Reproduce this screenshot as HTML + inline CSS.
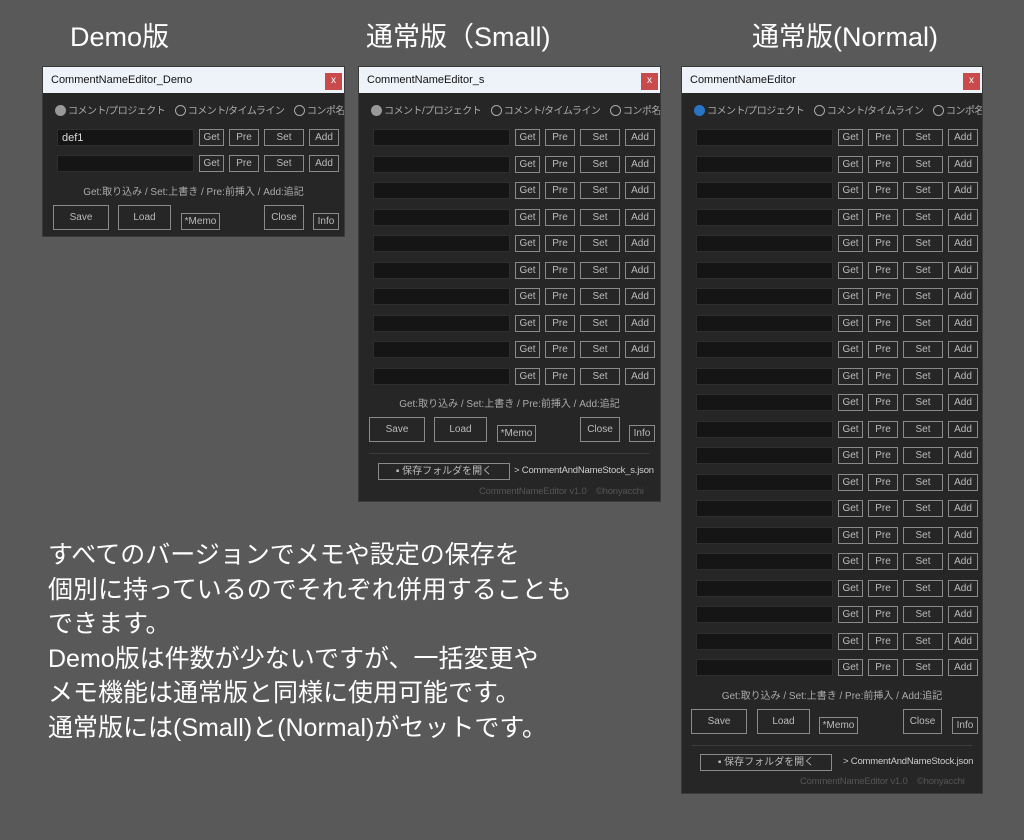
<!DOCTYPE html><html><head><meta charset="utf-8"><style>
body{margin:0;width:1024px;height:840px;background:#595959;position:relative;overflow:hidden;font-family:"Liberation Sans","Noto Sans CJK JP",sans-serif}
.h{position:absolute;color:#fff;font-size:27px;top:15px}
.w{position:absolute;background:#262626;border:1px solid #3a3a3a;overflow:hidden}
.t{position:absolute;left:0;right:0;top:0;height:26px;background:#eef3fa;color:#111;font-size:11px;line-height:26px;padding-left:8px}
.x{position:absolute;right:2px;top:6px;width:17px;height:17px;background:#c84a4a;color:#fff;font-size:10px;text-align:center;line-height:16px}
.rad{position:absolute;left:12px;top:35px;font-size:10px;letter-spacing:-0.5px;color:#aaa;white-space:nowrap}
.rad span{display:inline-block;width:9px;height:9px;border:1.5px solid #aaa;border-radius:50%;vertical-align:-2px;margin-right:2px}
.rad span.f{background:#999;border-color:#999}.rad span.bl{background:#2a74c6;border-color:#2a74c6}
.r{position:absolute;left:0;height:18px;width:300px}
.r i{position:absolute;left:14px;top:0;width:137px;height:17px;background:#151515;border:1px solid #2e2e2e;font-style:normal;font-size:11px;color:#ddd;line-height:17px;padding-left:4px;box-sizing:border-box}
.r b,.bt{position:absolute;top:0;height:17px;border:1px solid #8a8a8a;color:#bbb;font-weight:normal;font-size:10px;text-align:center;line-height:16px;box-sizing:border-box}
.g{left:156px;width:25px}.p{left:186px;width:30px}.s{left:221px;width:40px}.a{left:266px;width:30px}
.hl{position:absolute;left:0;right:0;text-align:center;font-size:10px;color:#aaa}
.bt{height:25px;line-height:23px}
.sep{position:absolute;left:10px;right:10px;height:1px;background:#3c3c3c}
.fd{position:absolute;font-size:9.5px;letter-spacing:-0.2px;color:#ccc;white-space:nowrap}
.txt{position:absolute;left:48px;top:538px;color:#fff;font-size:25px;line-height:34.5px;white-space:nowrap}
</style></head><body>
<div class="h" style="left:70px">Demo版</div>
<div class="h" style="left:366px">通常版（Small)</div>
<div class="h" style="left:752px">通常版(Normal)</div>

<div class="w" style="left:42px;top:66px;width:301px;height:169px">
<div class="t">CommentNameEditor_Demo</div><div class="x">x</div>
<div class="rad"><span class="f"></span>コメント/プロジェクト　<span></span>コメント/タイムライン　<span></span>コンポ名</div>
<div class="r" style="top:62px"><i>def1</i><b class="g">Get</b><b class="p">Pre</b><b class="s">Set</b><b class="a">Add</b></div>
<div class="r" style="top:88px"><i></i><b class="g">Get</b><b class="p">Pre</b><b class="s">Set</b><b class="a">Add</b></div>
<div class="hl" style="top:116px">Get:取り込み / Set:上書き / Pre:前挿入 / Add:追記</div>
<div class="bt" style="left:10px;top:138px;width:56px">Save</div>
<div class="bt" style="left:75px;top:138px;width:53px">Load</div>
<div class="bt" style="left:138px;top:146px;width:39px;height:17px;line-height:16px">*Memo</div>
<div class="bt" style="left:221px;top:138px;width:40px">Close</div>
<div class="bt" style="left:270px;top:146px;width:26px;height:17px;line-height:16px">Info</div>
</div>

<div class="w" style="left:358px;top:66px;width:301px;height:434px">
<div class="t">CommentNameEditor_s</div><div class="x">x</div>
<div class="rad"><span class="f"></span>コメント/プロジェクト　<span></span>コメント/タイムライン　<span></span>コンポ名</div>
<div class="r" style="top:62px"><i></i><b class="g">Get</b><b class="p">Pre</b><b class="s">Set</b><b class="a">Add</b></div>
<div class="r" style="top:88.5px"><i></i><b class="g">Get</b><b class="p">Pre</b><b class="s">Set</b><b class="a">Add</b></div>
<div class="r" style="top:115px"><i></i><b class="g">Get</b><b class="p">Pre</b><b class="s">Set</b><b class="a">Add</b></div>
<div class="r" style="top:141.5px"><i></i><b class="g">Get</b><b class="p">Pre</b><b class="s">Set</b><b class="a">Add</b></div>
<div class="r" style="top:168px"><i></i><b class="g">Get</b><b class="p">Pre</b><b class="s">Set</b><b class="a">Add</b></div>
<div class="r" style="top:194.5px"><i></i><b class="g">Get</b><b class="p">Pre</b><b class="s">Set</b><b class="a">Add</b></div>
<div class="r" style="top:221px"><i></i><b class="g">Get</b><b class="p">Pre</b><b class="s">Set</b><b class="a">Add</b></div>
<div class="r" style="top:247.5px"><i></i><b class="g">Get</b><b class="p">Pre</b><b class="s">Set</b><b class="a">Add</b></div>
<div class="r" style="top:274px"><i></i><b class="g">Get</b><b class="p">Pre</b><b class="s">Set</b><b class="a">Add</b></div>
<div class="r" style="top:300.5px"><i></i><b class="g">Get</b><b class="p">Pre</b><b class="s">Set</b><b class="a">Add</b></div>
<div class="hl" style="top:328px">Get:取り込み / Set:上書き / Pre:前挿入 / Add:追記</div>
<div class="bt" style="left:10px;top:350px;width:56px">Save</div>
<div class="bt" style="left:75px;top:350px;width:53px">Load</div>
<div class="bt" style="left:138px;top:358px;width:39px;height:17px;line-height:16px">*Memo</div>
<div class="bt" style="left:221px;top:350px;width:40px">Close</div>
<div class="bt" style="left:270px;top:358px;width:26px;height:17px;line-height:16px">Info</div>
<div class="sep" style="top:386px"></div>
<div class="bt" style="left:19px;top:396px;width:132px;height:17px;line-height:16px">▪ 保存フォルダを開く</div>
<div class="fd" style="left:155px;top:398px">&gt; CommentAndNameStock_s.json</div>
<div class="fd" style="left:120px;top:416px;color:#555">CommentNameEditor v1.0　©honyacchi</div>
</div>

<div class="w" style="left:681px;top:66px;width:300px;height:726px">
<div class="t">CommentNameEditor</div><div class="x">x</div>
<div class="rad"><span class="bl"></span>コメント/プロジェクト　<span></span>コメント/タイムライン　<span></span>コンポ名</div>
<div class="r" style="top:62px"><i></i><b class="g">Get</b><b class="p">Pre</b><b class="s">Set</b><b class="a">Add</b></div>
<div class="r" style="top:88.5px"><i></i><b class="g">Get</b><b class="p">Pre</b><b class="s">Set</b><b class="a">Add</b></div>
<div class="r" style="top:115px"><i></i><b class="g">Get</b><b class="p">Pre</b><b class="s">Set</b><b class="a">Add</b></div>
<div class="r" style="top:141.5px"><i></i><b class="g">Get</b><b class="p">Pre</b><b class="s">Set</b><b class="a">Add</b></div>
<div class="r" style="top:168px"><i></i><b class="g">Get</b><b class="p">Pre</b><b class="s">Set</b><b class="a">Add</b></div>
<div class="r" style="top:194.5px"><i></i><b class="g">Get</b><b class="p">Pre</b><b class="s">Set</b><b class="a">Add</b></div>
<div class="r" style="top:221px"><i></i><b class="g">Get</b><b class="p">Pre</b><b class="s">Set</b><b class="a">Add</b></div>
<div class="r" style="top:247.5px"><i></i><b class="g">Get</b><b class="p">Pre</b><b class="s">Set</b><b class="a">Add</b></div>
<div class="r" style="top:274px"><i></i><b class="g">Get</b><b class="p">Pre</b><b class="s">Set</b><b class="a">Add</b></div>
<div class="r" style="top:300.5px"><i></i><b class="g">Get</b><b class="p">Pre</b><b class="s">Set</b><b class="a">Add</b></div>
<div class="r" style="top:327px"><i></i><b class="g">Get</b><b class="p">Pre</b><b class="s">Set</b><b class="a">Add</b></div>
<div class="r" style="top:353.5px"><i></i><b class="g">Get</b><b class="p">Pre</b><b class="s">Set</b><b class="a">Add</b></div>
<div class="r" style="top:380px"><i></i><b class="g">Get</b><b class="p">Pre</b><b class="s">Set</b><b class="a">Add</b></div>
<div class="r" style="top:406.5px"><i></i><b class="g">Get</b><b class="p">Pre</b><b class="s">Set</b><b class="a">Add</b></div>
<div class="r" style="top:433px"><i></i><b class="g">Get</b><b class="p">Pre</b><b class="s">Set</b><b class="a">Add</b></div>
<div class="r" style="top:459.5px"><i></i><b class="g">Get</b><b class="p">Pre</b><b class="s">Set</b><b class="a">Add</b></div>
<div class="r" style="top:486px"><i></i><b class="g">Get</b><b class="p">Pre</b><b class="s">Set</b><b class="a">Add</b></div>
<div class="r" style="top:512.5px"><i></i><b class="g">Get</b><b class="p">Pre</b><b class="s">Set</b><b class="a">Add</b></div>
<div class="r" style="top:539px"><i></i><b class="g">Get</b><b class="p">Pre</b><b class="s">Set</b><b class="a">Add</b></div>
<div class="r" style="top:565.5px"><i></i><b class="g">Get</b><b class="p">Pre</b><b class="s">Set</b><b class="a">Add</b></div>
<div class="r" style="top:592px"><i></i><b class="g">Get</b><b class="p">Pre</b><b class="s">Set</b><b class="a">Add</b></div>
<div class="hl" style="top:620px">Get:取り込み / Set:上書き / Pre:前挿入 / Add:追記</div>
<div class="bt" style="left:9px;top:642px;width:56px">Save</div>
<div class="bt" style="left:75px;top:642px;width:53px">Load</div>
<div class="bt" style="left:137px;top:650px;width:39px;height:17px;line-height:16px">*Memo</div>
<div class="bt" style="left:221px;top:642px;width:39px">Close</div>
<div class="bt" style="left:270px;top:650px;width:26px;height:17px;line-height:16px">Info</div>
<div class="sep" style="top:678px"></div>
<div class="bt" style="left:18px;top:687px;width:132px;height:17px;line-height:16px">▪ 保存フォルダを開く</div>
<div class="fd" style="left:161px;top:689px">&gt; CommentAndNameStock.json</div>
<div class="fd" style="left:118px;top:706px;color:#555">CommentNameEditor v1.0　©honyacchi</div>
</div>

<div class="txt">すべてのバージョンでメモや設定の保存を<br>個別に持っているのでそれぞれ併用することも<br>できます。<br>Demo版は件数が少ないですが、一括変更や<br>メモ機能は通常版と同様に使用可能です。<br>通常版には(Small)と(Normal)がセットです。</div>
</body></html>
